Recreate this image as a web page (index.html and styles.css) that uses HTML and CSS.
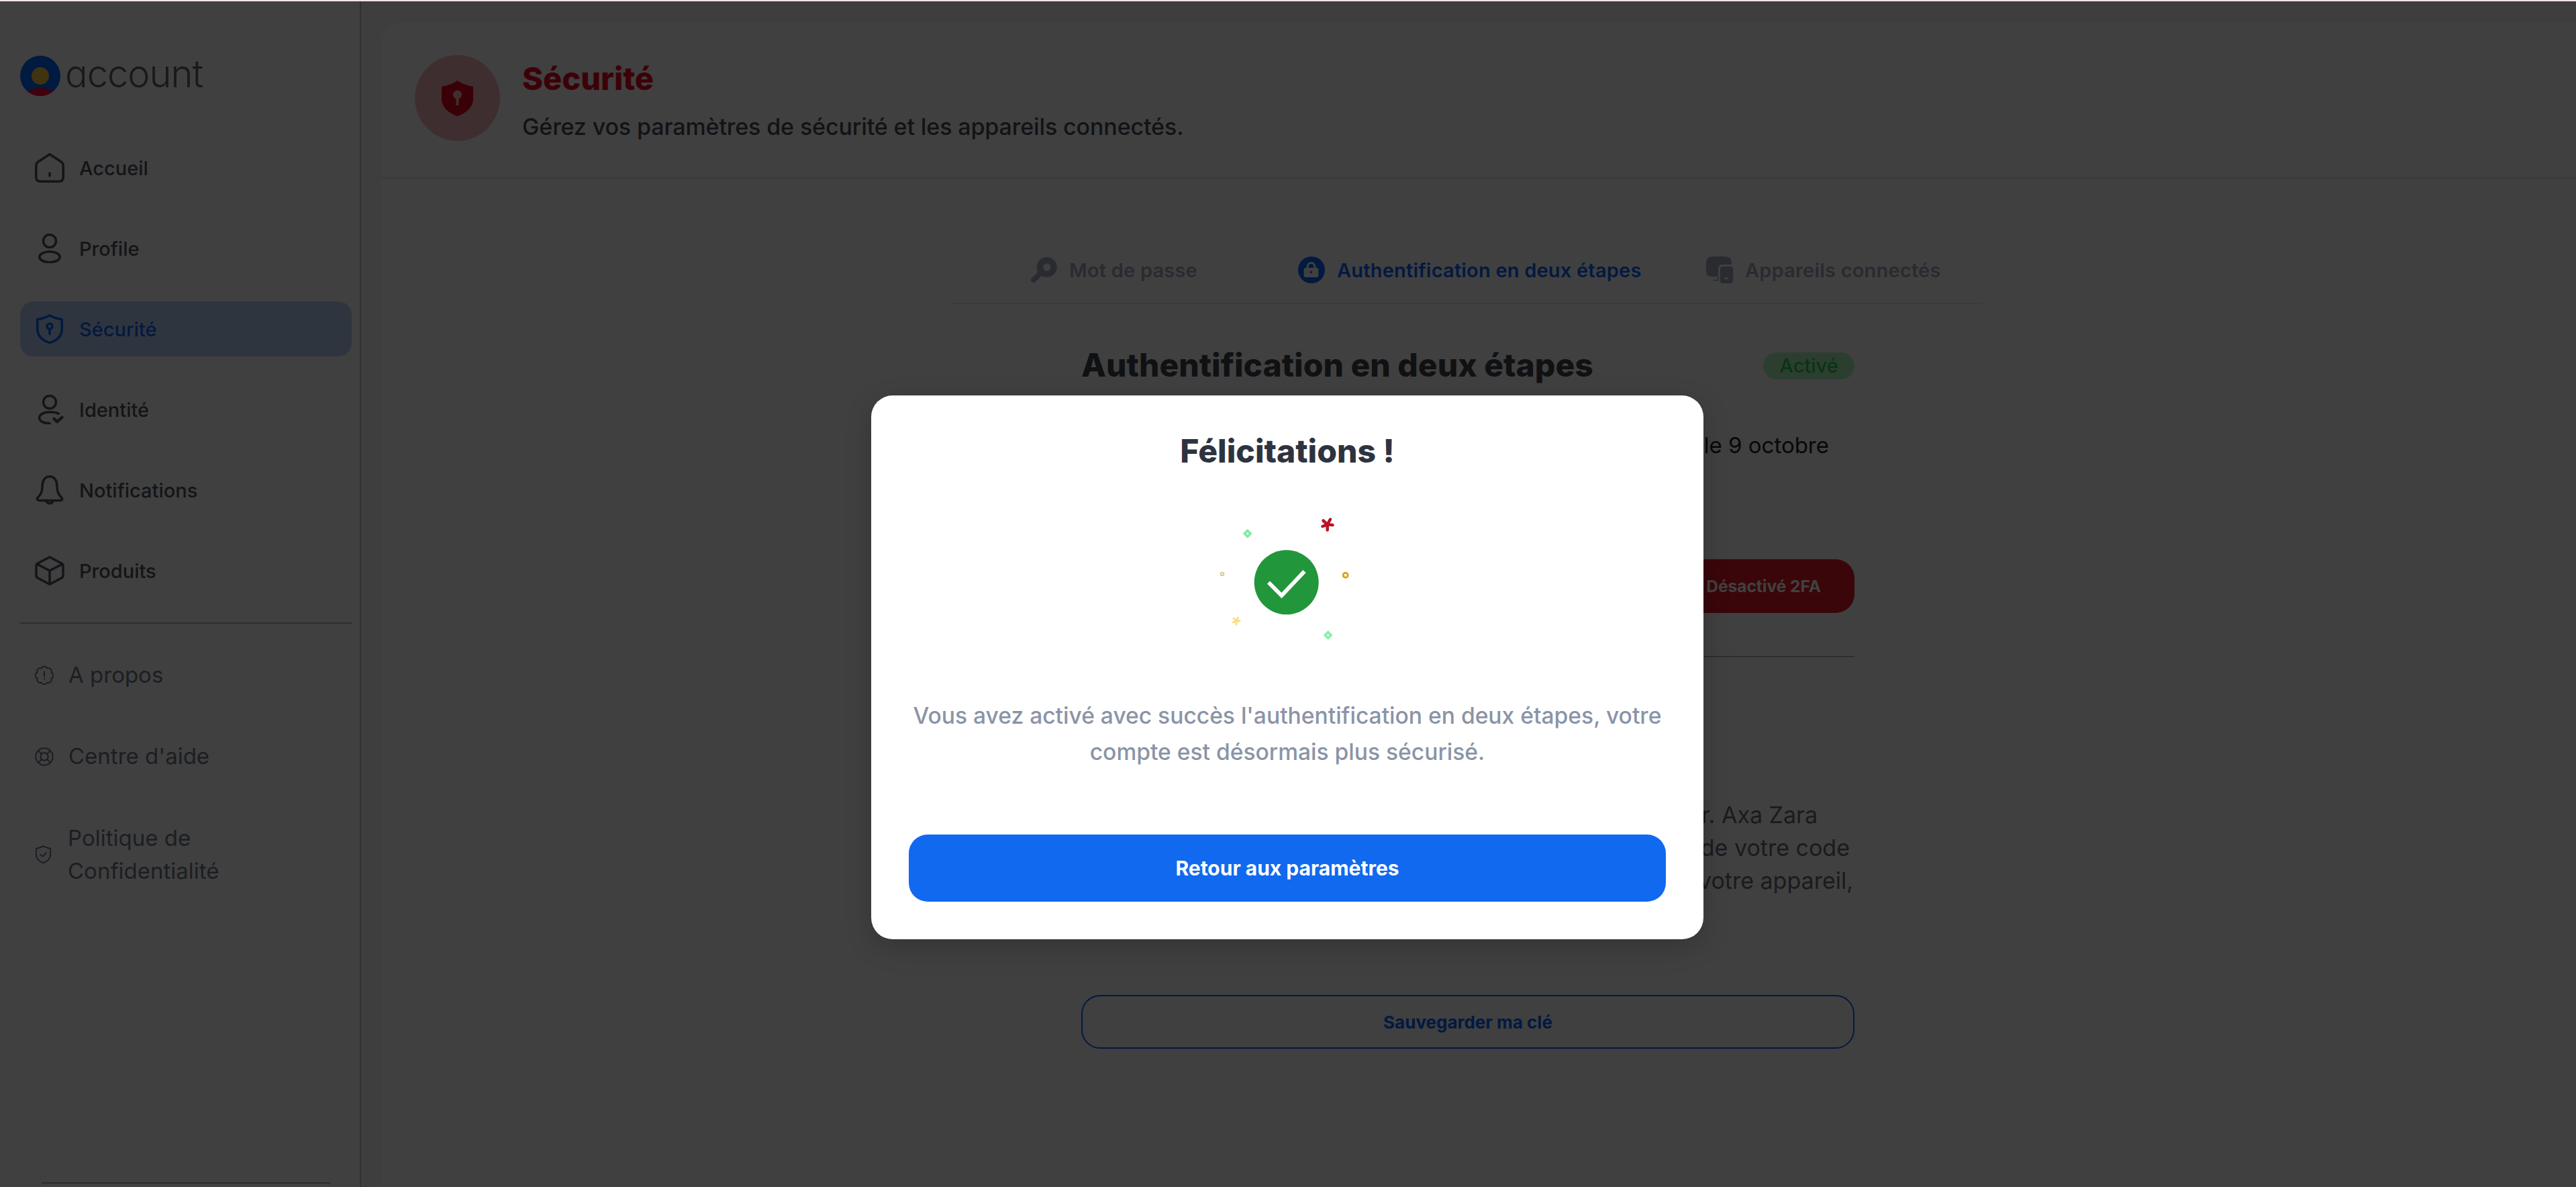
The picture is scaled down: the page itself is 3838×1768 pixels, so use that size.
FILE: index.html
```html
<!DOCTYPE html>
<html lang="fr">
<head>
<meta charset="utf-8">
<title>Sécurité</title>
<link rel="stylesheet" href="styles.css">
</head>
<body>
<div class="strip"></div>
<div class="app">
  <aside class="sidebar">
    <div class="logo">
      <svg class="logo-mark" viewBox="0 0 60 60"><defs><clipPath id="lc"><circle cx="30" cy="30" r="30"/></clipPath></defs><circle cx="30" cy="30" r="30" fill="#0068ff"/><ellipse cx="30" cy="63" rx="26" ry="15" fill="#ff0030" clip-path="url(#lc)"/><circle cx="30" cy="30" r="13" fill="#ffc940"/></svg>
      <span class="logo-text">account</span>
    </div>
    <nav class="nav">
      <a class="nav-item"><svg class="ico" viewBox="2 2 20 20"><path d="M12 2.800 20 8Q21.200 8.900 21.200 10.800V18.400Q21.200 21.200 18.400 21.200H5.600Q2.800 21.200 2.800 18.400V10.800Q2.800 8.900 4 8Z"/><path d="M12 15.500v2"/></svg>Accueil</a>
      <a class="nav-item"><svg class="ico" viewBox="2 2 20 20"><circle cx="12" cy="7" r="4.300"/><ellipse cx="12" cy="17.800" rx="6.900" ry="3.600"/></svg>Profile</a>
      <a class="nav-item active"><svg class="ico" viewBox="2 2 20 20"><path d="M12 2.800C14.500 4.300 17 5 20.300 5.500V12C20.300 17 16.500 19.900 12 21.400 7.500 19.900 3.700 17 3.700 12V5.500C7 5 9.500 4.300 12 2.800Z"/><circle cx="12" cy="10.200" r="1.800"/><path d="M12 12V15.500"/></svg>Sécurité</a>
      <a class="nav-item"><svg class="ico" viewBox="2 2 20 20"><circle cx="12" cy="7" r="4.300"/><path d="M18 14.800C16.500 14 14.500 13.700 12 13.700 7.800 13.700 5 15.500 5 17.600S7.500 21.300 12 21.300"/><path d="M15 18.300 17 20.300 20.400 17.300" stroke-width="2"/></svg>Identité</a>
      <a class="nav-item"><svg class="ico" viewBox="2 2 20 20"><path d="M12 2.800C8.500 2.800 7 6 7 9.500 7 13.500 5.800 15 4 17 3 18.200 3.700 19 5 19H19C20.300 19 21 18.200 20 17 18.200 15 17 13.500 17 9.500 17 6 15.500 2.800 12 2.800Z"/><path d="M9.800 19.500C10.300 21.400 13.700 21.400 14.200 19.500"/></svg>Notifications</a>
      <a class="nav-item"><svg class="ico" viewBox="2 2 20 20"><path d="M12 2.800 20 7Q21.100 7.600 21.100 8.800V15.200Q21.100 16.400 20 17L12 21.200 4 17Q2.900 16.400 2.900 15.200V8.800Q2.900 7.600 4 7Z"/><path d="M3.400 7.500 12 12 20.600 7.500M12 12V21"/></svg>Produits</a>
    </nav>
    <div class="side-rule"></div>
    <div class="sub-nav">
      <a class="sub-item"><svg class="ico-s" viewBox="1 1 22 22"><path d="M15.440 3.690A3.800 3.800 0 0 1 20.310 8.560 3.800 3.800 0 0 1 20.310 15.440 3.800 3.800 0 0 1 15.440 20.310 3.800 3.800 0 0 1 8.560 20.310 3.800 3.800 0 0 1 3.690 15.440 3.800 3.800 0 0 1 3.690 8.560 3.800 3.800 0 0 1 8.560 3.690 3.800 3.800 0 0 1 15.440 3.690Z"/><path d="M12 7.500V13M12 16v.6"/></svg>A propos</a>
      <a class="sub-item"><svg class="ico-s" viewBox="1 1 22 22"><circle cx="12" cy="12" r="10"/><circle cx="12" cy="12" r="4.500"/><path d="M5 5l4 4M19 5l-4 4M5 19l4-4M19 19l-4-4"/></svg>Centre d'aide</a>
      <a class="sub-item sub-wrap"><svg class="ico-s ico-narrow" viewBox="2 1 20 22"><path d="M12 2 20.500 5V12.500C20.500 17 16.500 20 12 22 7.500 20 3.500 17 3.500 12.500V5Z"/><path d="M8.500 12 11 14.300 15.500 9.800"/></svg><span>Politique de<br>Confidentialité</span></a>
    </div>
    <div class="side-foot"></div>
  </aside>

  <main class="main">
    <div class="card">
      <header class="page-head">
        <div class="head-badge">
          <svg class="head-shield" viewBox="0 0 47 53"><path d="M23.500 0C29 4 38 7.500 47 9V27C47 40 36 49 23.500 53 11 49 0 40 0 27V9C9 7.500 18 4 23.500 0Z" fill="#e8001c"/><circle cx="23.500" cy="21" r="6.500" fill="#fbb8c0"/><rect x="21.500" y="24" width="4" height="13" fill="#fbb8c0"/></svg>
        </div>
        <div class="head-text">
          <h1 class="head-title">Sécurité</h1>
          <p class="head-sub">Gérez vos paramètres de sécurité et les appareils connectés.</p>
        </div>
      </header>

      <div class="panel">
        <div class="tabs">
          <a class="tab tab-a"><svg class="tab-ico" viewBox="0 0 40 40"><path fill-rule="evenodd" d="M24.700 1A15 15 0 1 1 24.700 31 15 15 0 0 1 24.700 1ZM24.700 10.500A5.500 5.500 0 1 0 24.700 21.500 5.500 5.500 0 0 0 24.700 10.500Z"/><path d="M14 26 11.500 28.500" class="key-stem"/><path d="M9.500 30.500 5 35" class="key-stem"/></svg>Mot de passe</a>
          <a class="tab tab-b on"><svg class="tab-ico" viewBox="0 0 40 40"><path fill-rule="evenodd" d="M20 0A20 20 0 1 1 20 40 20 20 0 0 1 20 0ZM19.500 8A6.800 6.800 0 0 0 12.700 14.800V17H11.500Q8.500 17 8.500 20V28Q8.500 31 11.500 31H27.500Q30.500 31 30.500 28V20Q30.500 17 27.500 17H26.300V14.800A6.800 6.800 0 0 0 19.500 8ZM19.500 11A3.800 3.800 0 0 1 23.300 14.800V17H15.700V14.800A3.800 3.800 0 0 1 19.500 11ZM19.300 21.500A1.800 1.800 0 1 0 19.300 25.100 1.800 1.800 0 0 0 19.300 21.500Z"/></svg>Authentification en deux étapes</a>
          <a class="tab tab-c"><svg class="tab-ico" viewBox="0 0 40 40"><path d="M10 0H28Q38 0 38 10V12H24Q18 12 18 18V30H8Q0 30 0 22V10Q0 0 10 0Z"/><path d="M18 30V35.500H10" class="dev-foot"/><path fill-rule="evenodd" d="M25 15H36Q40 15 40 19V36Q40 40 36 40H25Q21 40 21 36V19Q21 15 25 15ZM27 31.500V34H33V31.500Z"/></svg>Appareils connectés</a>
        </div>

        <section class="content">
          <div class="sec-head">
            <h2 class="sec-title">Authentification en deux étapes</h2>
            <span class="pill">Activé</span>
          </div>
          <p class="since">Activée le 9 octobre</p>
          <div class="row-action"><button class="btn-danger">Désactivé 2FA</button></div>
          <div class="rule"></div>
          <p class="explain">
            <span class="ln ln1">endroit sûr. Axa Zara</span>
            <span class="ln ln2">de votre code</span>
            <span class="ln ln3">de votre appareil,</span>
          </p>
          <button class="btn-ghost">Sauvegarder ma clé</button>
        </section>
      </div>
    </div>
  </main>

  <div class="overlay">
    <div class="modal">
      <h3 class="modal-title">Félicitations !</h3>
      <svg class="confetti" viewBox="-2 0 360 240">
        <circle cx="176.700" cy="127.300" r="48" fill="#21963b"/>
        <path d="M150 127.500 169.500 147 203.500 111" fill="none" stroke="#fff" stroke-width="6"/>
        <path d="M118.700 47.700 125.700 54.700 118.700 61.700 111.700 54.700Z" fill="#86eaa5"/><circle cx="118.700" cy="54.700" r="1.500" fill="#fff"/>
        <path d="M238.700 199 245.700 206 238.700 213 231.700 206Z" fill="#88f0a8"/><circle cx="238.700" cy="206" r="1.500" fill="#fff"/>
        <path d="M237.700 41.300V49.500M237.700 41.300 245.500 42M237.700 41.300 242 33.500M237.700 41.300 231.500 35.500M237.700 41.300 230.500 44" stroke="#b91224" stroke-width="4.500" stroke-linecap="round" fill="none"/>
        <path d="M102 184.700V190M102 184.700 107 184.700M102 184.700 104.500 180M102 184.700 98 181M102 184.700 97.500 187" stroke="#fbdd80" stroke-width="3" stroke-linecap="round" fill="none"/>
        <circle cx="81" cy="115" r="2.300" fill="none" stroke="#dac98e" stroke-width="2"/>
        <circle cx="264.700" cy="116.700" r="3.500" fill="none" stroke="#dca628" stroke-width="3"/>
      </svg>
      <p class="modal-text">Vous avez activé avec succès l'authentification en deux étapes, votre compte est désormais plus sécurisé.</p>
      <button class="btn-primary">Retour aux paramètres</button>
    </div>
  </div>
</div>
</body>
</html>
```

FILE: styles.css
```css
* { box-sizing: border-box; }
html, body { margin: 0; padding: 0; }
body {
  width: 3838px;
  height: 1768px;
  overflow: hidden;
  background: #fff;
  font-family: "Inter", "Noto Sans", "Liberation Sans", sans-serif;
  color: #586070;
}
h1, h2, h3, p { margin: 0; }
button { font-family: inherit; cursor: pointer; }

.strip { height: 2px; background: #fbe5e5; }
.app { position: relative; display: flex; height: 1766px; overflow: hidden; }

/* sidebar */
.sidebar {
  width: 538px;
  flex: none;
  display: flex;
  flex-direction: column;
  padding: 80px 12px 0 30px;
  border-right: 2px solid #c4c4cc;
  background: #fff;
}
.logo { display: flex; align-items: center; gap: 7px; height: 61px; }
.logo-mark { width: 60px; height: 60px; flex: none; }
.logo-text {
  font-size: 56px;
  font-weight: 300;
  letter-spacing: -1px;
  color: #606468;
  font-feature-settings: "cv11" 1;
  line-height: 61px;
  margin-top: -5px;
}
.nav { display: flex; flex-direction: column; gap: 38px; margin-top: 66px; }
.nav-item {
  display: flex;
  align-items: center;
  gap: 22px;
  height: 82px;
  padding-left: 22px;
  border-radius: 20px;
  font-size: 29px;
  font-weight: 500;
  color: #4c5460;
}
.nav-item.active { background: #bcd4f8; color: #0b65ff; }
.ico { width: 44px; height: 44px; flex: none; fill: none; stroke: currentColor; stroke-width: 1.600; stroke-linecap: round; stroke-linejoin: round; }
.side-rule { height: 2px; background: #a8b8d4; margin-top: 36px; }
.sub-nav { display: flex; flex-direction: column; gap: 72px; margin-top: 52px; }
.sub-item {
  display: flex;
  align-items: center;
  gap: 22px;
  padding-left: 22px;
  font-size: 33px;
  line-height: 49px;
  font-weight: 400;
  color: #70788a;
}
.sub-wrap { gap: 24px; margin-top: 1px; }
.ico-s { width: 28px; height: 28px; flex: none; fill: none; stroke: currentColor; stroke-width: 1.600; stroke-linecap: round; stroke-linejoin: round; }
.ico-narrow { width: 25px; }
.side-foot { margin: auto 32px 5px 32px; height: 2px; width: 431px; background: #a8b4c8; flex: none; }

/* main */
.main { flex: 1; min-width: 0; background: #f8f8f8; padding: 31px 0 0 30px; }
.card { background: #fff; border-top-left-radius: 32px; height: 100%; }
.page-head {
  display: flex;
  gap: 33px;
  height: 233px;
  padding: 49px 0 0 50px;
  border-bottom: 2px solid #e8e8e8;
}
.head-badge {
  width: 127px;
  height: 128px;
  flex: none;
  display: flex;
  align-items: center;
  justify-content: center;
  border-radius: 50%;
  background: #fbb8c0;
}
.head-shield { width: 47px; height: 53px; }
.head-title { font-size: 47px; line-height: 60px; font-weight: 800; color: #f00020; margin-top: 5px; }
.head-sub { font-size: 34px; line-height: 50px; letter-spacing: -.12px; font-weight: 500; color: #484c58; margin-top: 17px; }

.panel { margin-left: 850px; width: 1536px; }
.tabs {
  display: flex;
  height: 187px;
  padding: 116px 0 0 117px;
  border-bottom: 2px solid #e8e8e8;
}
.tab {
  display: flex;
  align-items: center;
  gap: 18px;
  height: 40px;
  font-size: 29px;
  letter-spacing: .2px;
  font-weight: 600;
  color: #a4acc0;
  white-space: nowrap;
}
.tab-a { width: 399px; }
.tab-b { width: 608px; }
.tab-ico { width: 40px; height: 40px; flex: none; fill: currentColor; }
.key-stem { fill: none; stroke: currentColor; stroke-width: 8; stroke-linecap: round; }
.dev-foot { fill: none; stroke: currentColor; stroke-width: 1.500; }
.tab.on { color: #0b65ff; }

.content { width: 1152px; margin-left: 193px; padding-top: 71px; }
.sec-head { display: flex; align-items: center; justify-content: space-between; height: 40px; }
.sec-title { font-size: 48px; line-height: 60px; font-weight: 800; color: #40444e; }
.pill {
  display: flex;
  align-items: center;
  justify-content: center;
  width: 136px;
  height: 40px;
  margin-top: 1px;
  border-radius: 20px;
  background: #b0f8c0;
  color: #28d048;
  font-size: 29px;
  font-weight: 500;
}
.since {
  margin-top: 74px;
  padding-right: 38px;
  text-align: right;
  font-size: 33px;
  line-height: 50px;
  font-weight: 400;
  color: #202024;
}
.row-action { display: flex; justify-content: flex-end; margin-top: 145px; }
.btn-danger {
  width: 500px;
  height: 80px;
  border: 0;
  border-radius: 28px;
  background: #e81828;
  color: #fff;
  font-size: 24.500px;
  font-weight: 700;
  padding: 0 50px 0 0;
  text-align: right;
}
.rule { height: 2px; background: #b8b8b8; margin-top: 64px; }
.explain { margin-top: 210px; font-size: 34px; line-height: 49px; font-weight: 400; color: #686e78; }
.ln { display: block; text-align: right; white-space: nowrap; }
.ln1 { padding-right: 55px; }
.ln2 { padding-right: 7px; }
.ln3 { padding-right: 2px; }
.btn-ghost {
  display: block;
  width: 1152px;
  height: 80px;
  margin-top: 146px;
  border: 2px solid #0b65ff;
  border-radius: 28px;
  background: #fff;
  color: #0b65ff;
  font-size: 26px;
  font-weight: 700;
}

/* modal */
.overlay {
  position: absolute;
  inset: 0;
  display: flex;
  justify-content: center;
  align-items: flex-start;
  padding: 587px 2px 0 0;
  background: rgba(0, 0, 0, .75);
}
.modal {
  width: 1240px;
  height: 810px;
  display: flex;
  flex-direction: column;
  align-items: center;
  padding: 47px 56px 56px;
  border-radius: 32px;
  background: #fff;
  box-shadow: 0 12px 40px rgba(0, 0, 0, .18);
}
.modal-title { font-size: 48px; line-height: 72px; font-weight: 800; color: #2d3440; }
.confetti { width: 360px; height: 240px; margin-top: 32px; flex: none; }
.modal-text {
  margin-top: 59px;
  font-size: 33.600px;
  line-height: 54px;
  font-weight: 500;
  color: #8a94a6;
  text-align: center;
}
.btn-primary {
  width: 1128px;
  height: 100px;
  margin-top: 96px;
  border: 0;
  border-radius: 28px;
  background: #1169f0;
  color: #fff;
  font-size: 30px;
  font-weight: 700;
  flex: none;
}
```
